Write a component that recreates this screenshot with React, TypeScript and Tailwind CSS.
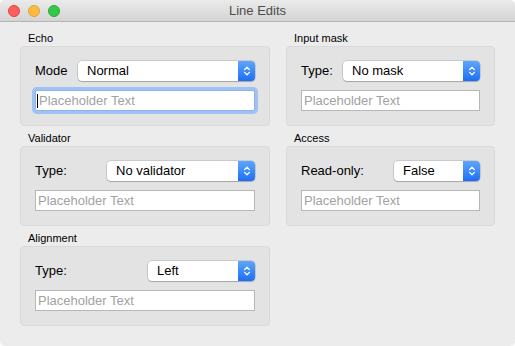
import React from "react";

const Chevrons: React.FC = () => (
  <svg width="8" height="12" viewBox="0 0 8 12" fill="none">
    <path d="M1.6 4.6 L4 2.2 L6.4 4.6" stroke="white" strokeWidth="1.3" strokeLinecap="round" strokeLinejoin="round" />
    <path d="M1.6 7.4 L4 9.8 L6.4 7.4" stroke="white" strokeWidth="1.3" strokeLinecap="round" strokeLinejoin="round" />
  </svg>
);

type ComboProps = { value: string; width: string };

const Combo: React.FC<ComboProps> = ({ value, width }) => (
  <div
    className={`${width} h-[20px] flex items-stretch rounded-[4px] bg-white shadow-[0_0_0_0.5px_rgba(0,0,0,0.22),0_1px_1px_rgba(0,0,0,0.18)] overflow-hidden`}
  >
    <span className="flex-1 pl-[9px] flex items-center text-[13px] text-black">{value}</span>
    <span className="w-[17px] flex items-center justify-center bg-gradient-to-b from-[#5ea6fb] to-[#1a6ef4]">
      <Chevrons />
    </span>
  </div>
);

const LineEdit: React.FC<{ focused?: boolean }> = ({ focused }) => (
  <div
    className={`h-[21px] flex items-center bg-white border ${
      focused
        ? "border-[#8eb4ea] shadow-[0_0_0_3px_#9ec2f3] rounded-[2px]"
        : "border-[#b7b7b7]"
    }`}
  >
    {focused && <span className="ml-[1px] w-px h-[14px] bg-black" />}
    <span className={`${focused ? "pl-[1px]" : "pl-[2px]"} text-[13px] text-[#a2a2a2] whitespace-nowrap`}>
      Placeholder Text
    </span>
  </div>
);

type GroupProps = {
  title: string;
  label: string;
  value: string;
  comboWidth: string;
  focused?: boolean;
};

const Group: React.FC<GroupProps> = ({ title, label, value, comboWidth, focused }) => (
  <section>
    <div className="h-[15px] leading-[15px] pl-2 text-[11px] text-black">{title}</div>
    <div className="h-[80px] rounded-[4px] border border-[#d9d9d9] bg-[#e3e3e3] px-[14px] pt-[14px]">
      <div className="h-[20px] flex items-center justify-between">
        <span className="text-[13px] text-black">{label}</span>
        <Combo value={value} width={comboWidth} />
      </div>
      <div className="mt-[9px]">
        <LineEdit focused={focused} />
      </div>
    </div>
  </section>
);

const App: React.FC = () => {
  return (
    <div className="w-[515px] h-[346px] bg-white">
      <div className="h-full flex flex-col rounded-[5px] overflow-hidden bg-[#ececec] font-['Liberation_Sans',Arial,sans-serif]">
        <header className="relative h-[22px] shrink-0 flex items-center justify-center bg-gradient-to-b from-[#ebebeb] to-[#d4d4d4] border-b border-[#b4b4b4]">
          <div className="absolute left-[8px] top-[5px] flex gap-[8px]">
            <span className="w-[12px] h-[12px] rounded-full bg-[#fc605c] border border-[#e0443e]" />
            <span className="w-[12px] h-[12px] rounded-full bg-[#fdbc40] border border-[#dea236]" />
            <span className="w-[12px] h-[12px] rounded-full bg-[#34c84a] border border-[#27aa35]" />
          </div>
          <span className="text-[13px] text-[#4d4d4d]">Line Edits</span>
        </header>
        <main className="flex gap-4 px-5 pt-[9px]">
          <div className="w-[250px] flex flex-col gap-[5px]">
            <Group title="Echo" label="Mode" value="Normal" comboWidth="w-[177px]" focused />
            <Group title="Validator" label="Type:" value="No validator" comboWidth="w-[148px]" />
            <Group title="Alignment" label="Type:" value="Left" comboWidth="w-[107px]" />
          </div>
          <div className="w-[209px] flex flex-col gap-[5px]">
            <Group title="Input mask" label="Type:" value="No mask" comboWidth="w-[137px]" />
            <Group title="Access" label="Read-only:" value="False" comboWidth="w-[86px]" />
          </div>
        </main>
      </div>
    </div>
  );
};

export default App;
